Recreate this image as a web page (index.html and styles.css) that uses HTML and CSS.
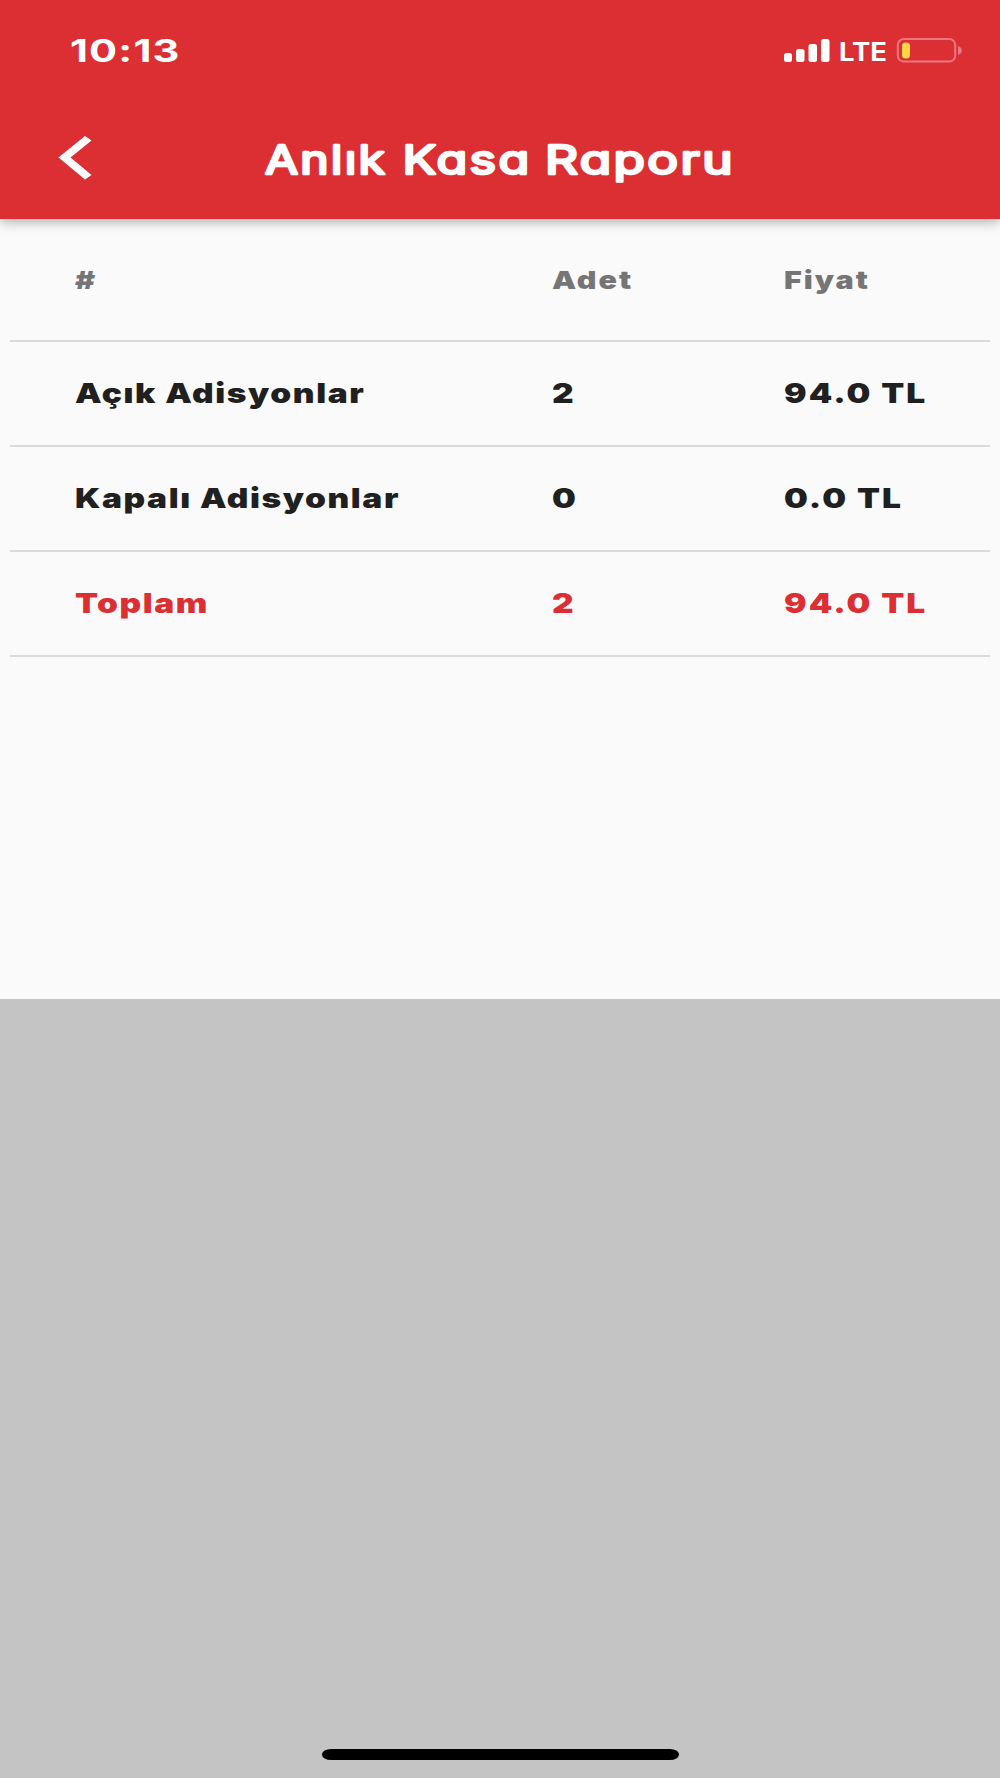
FILE: index.html
```html
<!DOCTYPE html>
<html lang="tr">
<head>
    <meta charset="UTF-8">
    <meta name="viewport" content="width=device-width, initial-scale=1.0">
    <title>Anlık Kasa Raporu</title>
    <link rel="stylesheet" href="styles.css">
</head>
<body>
    <!-- Header -->
    <header class="header">
        <div class="status-bar">
            <span class="clock wide">10:13</span>
            <svg class="status-icons" viewBox="0 0 182 30" width="182" height="30">
                <g fill="#fff">
                    <rect x="4" y="17" width="8" height="9" rx="2.5"/>
                    <rect x="16" y="13" width="8.5" height="13" rx="2.5"/>
                    <rect x="28.5" y="8" width="8.5" height="18" rx="2.5"/>
                    <rect x="41" y="3" width="8.5" height="23" rx="2.5"/>
                </g>
                <text class="network" x="59" y="24.7" textLength="48" lengthAdjust="spacingAndGlyphs">LTE</text>
                <rect x="117.8" y="3" width="57.4" height="22.6" rx="6" fill="none" stroke="#eb7880" stroke-width="2"/>
                <rect x="122" y="6.5" width="8" height="16" rx="3.5" fill="#f8d648"/>
                <path d="M178 10c5 1.500 5 7.500 0 9z" fill="#eb7880"/>
            </svg>
        </div>
        <div class="title-bar">
            <svg class="back-icon" viewBox="0 0 34 46" width="34" height="46">
                <path d="M27 1 33.500 5.500 12.500 22.500 33.500 40 27 44.500 .500 22.500z" fill="#fff"/>
            </svg>
            <svg class="title" viewBox="0 0 480 60" width="480" height="60">
                <text y="42.500" lengthAdjust="spacingAndGlyphs"><tspan x="6" textLength="122" lengthAdjust="spacingAndGlyphs">Anlık</tspan> <tspan x="143.500" textLength="129" lengthAdjust="spacingAndGlyphs">Kasa</tspan> <tspan x="286" textLength="190" lengthAdjust="spacingAndGlyphs">Raporu</tspan></text>
            </svg>
        </div>
    </header>

    <!-- Report table -->
    <main class="report">
        <div class="row head">
            <div><span class="wide">#</span></div>
            <div><span class="wide">Adet</span></div>
            <div><span class="wide">Fiyat</span></div>
        </div>
        <div class="row">
            <div><span class="wide">Açık Adisyonlar</span></div>
            <div><span class="wide">2</span></div>
            <div><span class="wide price">94.0 TL</span></div>
        </div>
        <div class="row">
            <div><span class="wide">Kapalı Adisyonlar</span></div>
            <div><span class="wide">0</span></div>
            <div><span class="wide price">0.0 TL</span></div>
        </div>
        <div class="row total">
            <div><span class="wide">Toplam</span></div>
            <div><span class="wide">2</span></div>
            <div><span class="wide price">94.0 TL</span></div>
        </div>
    </main>

    <footer class="bottom">
        <div class="home-indicator"></div>
    </footer>
</body>
</html>
```
FILE: styles.css
```css
* {
    box-sizing: border-box;
}

body {
    margin: 0;
    height: 1778px;
    display: flex;
    flex-direction: column;
    font-family: 'Inter', sans-serif;
    background: #fafafa;
    color: #202020;
    overflow: hidden;
}

/* Extended look for the labels */
.wide {
    display: inline-block;
    transform: scaleX(1.218);
    transform-origin: left center;
    white-space: nowrap;
}

.header {
    height: 219px;
    flex: none;
    background: #db2f33;
    color: #fff;
    box-shadow: 0 2px 12px rgba(0, 0, 0, 0.35);
}

.status-bar {
    height: 100px;
    padding: 36px 38px 0 70px;
    display: flex;
    justify-content: space-between;
    align-items: flex-start;
}

.clock {
    font-size: 31.5px;
    font-weight: 700;
    line-height: 30px;
    letter-spacing: 0.9px;
    transform: scaleX(1.32);
}

.network {
    font-size: 25px;
    font-weight: 700;
    fill: #fff;
}

.title-bar {
    padding: 31px 0 0 58px;
    display: flex;
    align-items: flex-start;
    gap: 167px;
}

.back-icon {
    margin-top: 4px;
}

.title text {
    font-size: 39px;
    font-weight: 400;
    font-feature-settings: "cv11";
    letter-spacing: 1.8px;
    fill: #fff;
    stroke: #fff;
    stroke-width: 2.5px;
    stroke-linejoin: round;
}

/* Table */
.report {
    height: 780px;
    flex: none;
    padding: 0 10px;
}

.row {
    height: 105px;
    padding: 0 65px 2px;
    display: grid;
    grid-template-columns: 477px 232px 1fr;
    align-items: center;
    border-bottom: 2px solid #dadada;
    font-size: 27.5px;
    font-weight: 900;
    line-height: 34px;
    letter-spacing: 1.3px;
}

.price {
    letter-spacing: 1.7px;
}

.head {
    height: 123px;
    padding: 1px 65px 0;
    color: #757575;
    font-size: 25px;
    letter-spacing: 1.6px;
}

.total {
    color: #db2f33;
}

.bottom {
    flex: 1;
    display: flex;
    justify-content: center;
    align-items: flex-end;
    padding-bottom: 18px;
    background: #c4c4c4;
}

.home-indicator {
    width: 357px;
    height: 11px;
    border-radius: 9px / 5.5px;
    background: #000;
}
```
